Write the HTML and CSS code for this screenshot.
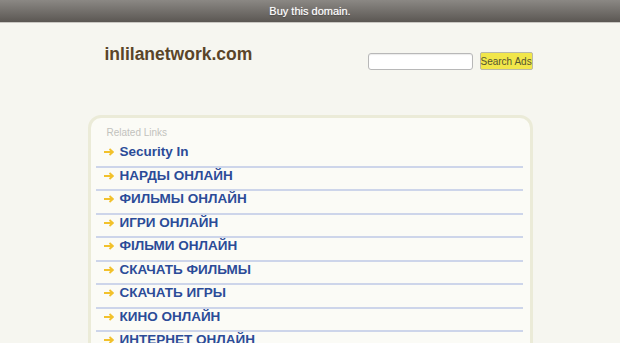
FILE: index.html
```html
<!DOCTYPE html>
<html lang="en">
<head>
    <meta charset="UTF-8">
    <title>inlilanetwork.com</title>
    <link rel="stylesheet" href="styles.css">
</head>
<body>
    <div class="topbar">Buy this domain.</div>
    <div class="wrap">
        <div class="header">
            <div class="domain">inlilanetwork.com</div>
            <form class="search">
                <input type="text" class="search-box">
                <button type="button" class="search-btn">Search Ads</button>
            </form>
        </div>
        <div class="links-box">
            <div class="related">Related Links</div>
            <ul class="links">
                <li><svg class="arrow" viewBox="0 0 10 8"><path d="M0 4H8.5M5.5 1L8.8 4L5.5 7"/></svg><a href="#">Security In</a></li>
                <li><svg class="arrow" viewBox="0 0 10 8"><path d="M0 4H8.5M5.5 1L8.8 4L5.5 7"/></svg><a href="#">НАРДЫ ОНЛАЙН</a></li>
                <li><svg class="arrow" viewBox="0 0 10 8"><path d="M0 4H8.5M5.5 1L8.8 4L5.5 7"/></svg><a href="#">ФИЛЬМЫ ОНЛАЙН</a></li>
                <li><svg class="arrow" viewBox="0 0 10 8"><path d="M0 4H8.5M5.5 1L8.8 4L5.5 7"/></svg><a href="#">ИГРИ ОНЛАЙН</a></li>
                <li><svg class="arrow" viewBox="0 0 10 8"><path d="M0 4H8.5M5.5 1L8.8 4L5.5 7"/></svg><a href="#">ФІЛЬМИ ОНЛАЙН</a></li>
                <li><svg class="arrow" viewBox="0 0 10 8"><path d="M0 4H8.5M5.5 1L8.8 4L5.5 7"/></svg><a href="#">СКАЧАТЬ ФИЛЬМЫ</a></li>
                <li><svg class="arrow" viewBox="0 0 10 8"><path d="M0 4H8.5M5.5 1L8.8 4L5.5 7"/></svg><a href="#">СКАЧАТЬ ИГРЫ</a></li>
                <li><svg class="arrow" viewBox="0 0 10 8"><path d="M0 4H8.5M5.5 1L8.8 4L5.5 7"/></svg><a href="#">КИНО ОНЛАЙН</a></li>
                <li><svg class="arrow" viewBox="0 0 10 8"><path d="M0 4H8.5M5.5 1L8.8 4L5.5 7"/></svg><a href="#">ИНТЕРНЕТ ОНЛАЙН</a></li>
            </ul>
        </div>
    </div>
</body>
</html>
```

FILE: styles.css
```css
body {
    margin: 0;
    padding: 0;
    font-family: "Liberation Sans", Arial, sans-serif;
    background-color: #f6f6f0;
    overflow: hidden;
}
.topbar {
    height: 22px;
    line-height: 22px;
    text-align: center;
    font-size: 11px;
    color: #ffffff;
    text-shadow: 0 0 1px rgba(255, 255, 255, 0.6), 0 1px 1px rgba(0, 0, 0, 0.4);
    background: linear-gradient(#8b8884, #5b5753);
    border-bottom: 1px solid #c9c7c2;
}
.wrap {
    width: 445px;
    margin: 0 auto;
}
.header {
    display: flex;
    align-items: center;
    justify-content: space-between;
    height: 61px;
    padding: 0 0 0 17px;
    margin-bottom: 31px;
}
.domain {
    font-size: 17.5px;
    font-weight: bold;
    color: #5a4529;
    margin-top: 1px;
}
.search {
    display: flex;
    align-items: center;
    gap: 7px;
    margin: 15px 0 0 0;
}
.search-box {
    box-sizing: border-box;
    width: 105px;
    height: 17px;
    padding: 0;
    border: 1px solid #b8b8b8;
    border-radius: 3px;
    background-color: #ffffff;
    box-shadow: inset 0 1px 1px rgba(0, 0, 0, 0.08);
}
.search-btn {
    box-sizing: border-box;
    width: 53px;
    height: 18px;
    padding: 0;
    white-space: nowrap;
    font-family: "Liberation Sans", Arial, sans-serif;
    font-size: 10px;
    color: #555530;
    background-color: #f1e64a;
    border: 1px solid #b9b9a8;
    border-radius: 2px;
}
.links-box {
    height: 300px;
    border: 3px solid #ebebd8;
    border-radius: 13px;
    background-color: #fbfbf6;
    padding: 9px 7px 0 5px;
}
.related {
    font-size: 10px;
    line-height: 12px;
    color: #c2c2bd;
    padding-left: 11px;
    margin-bottom: 5px;
}
.links {
    list-style: none;
    margin: 0;
    padding: 0;
}
.links li {
    display: flex;
    align-items: center;
    height: 16px;
    padding: 0 0 5.5px 8px;
    border-bottom: 2px solid #cdd5ea;
    white-space: nowrap;
}
.arrow {
    width: 10px;
    height: 8px;
    margin-right: 6px;
    fill: none;
    stroke: #f2c12b;
    stroke-width: 1.8;
}
.links a {
    font-size: 13.5px;
    line-height: 16px;
    font-weight: bold;
    color: #2b4b98;
    text-decoration: none;
}
```
